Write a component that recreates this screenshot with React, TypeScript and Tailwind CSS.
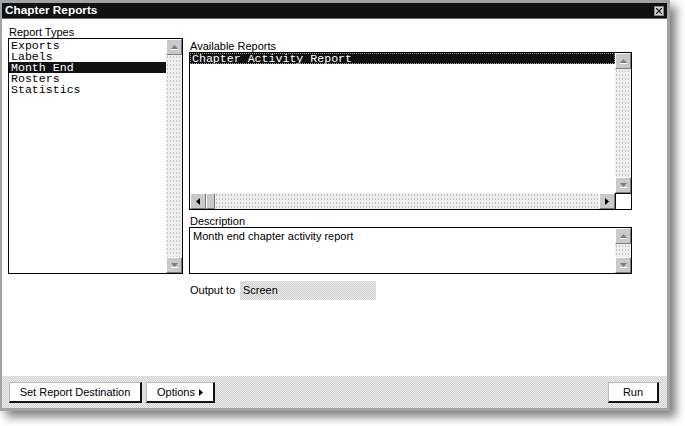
import React from "react";

const sans = { fontFamily: '"Liberation Sans", Arial, sans-serif' };
const mono = { fontFamily: '"Liberation Mono", "Courier New", monospace' };

type Dir = "up" | "down" | "left" | "right";

function Arrow({ dir, dark }: { dir: Dir; dark?: boolean }) {
  const fill = dark ? "#000" : "#7c7c7c";
  if (dir === "up")
    return (
      <svg width="7" height="5" viewBox="0 0 7 5">
        <path d="M3.5 0 L7 4 L0 4 Z" fill={fill} />
        {!dark && <rect x="0" y="4" width="7" height="1" fill="#fff" />}
      </svg>
    );
  if (dir === "down")
    return (
      <svg width="7" height="5" viewBox="0 0 7 5">
        <path d="M0 0 L7 0 L3.5 4 Z" fill={fill} />
        {!dark && <rect x="0" y="4" width="7" height="1" fill="#fff" />}
      </svg>
    );
  if (dir === "left")
    return (
      <svg width="4" height="7" viewBox="0 0 4 7">
        <path d="M4 0 L4 7 L0 3.5 Z" fill={fill} />
      </svg>
    );
  return (
    <svg width="4" height="7" viewBox="0 0 4 7">
      <path d="M0 0 L4 3.5 L0 7 Z" fill={fill} />
    </svg>
  );
}

function SBtn({ dir, dark }: { dir: Dir; dark?: boolean }) {
  return (
    <div className="w-4 h-4 shrink-0 bg-[#c9c9c9] border border-t-white border-l-white border-r-[#7a7a7a] border-b-[#7a7a7a] flex items-center justify-center">
      <Arrow dir={dir} dark={dark} />
    </div>
  );
}

const track =
  "bg-[#eeeeee] bg-[radial-gradient(#c4c4c4_0.5px,transparent_0.7px)] bg-[length:3px_4px]";

function VScroll() {
  return (
    <div className="w-4 flex flex-col shrink-0">
      <SBtn dir="up" />
      <div className={`flex-1 ${track}`} />
      <SBtn dir="down" />
    </div>
  );
}

function Btn({ children, w }: { children: React.ReactNode; w: string }) {
  return (
    <div
      className={`${w} h-[21px] bg-white border-t border-l border-t-[#bdbdbd] border-l-[#bdbdbd] border-r-2 border-b-2 border-r-[#111] border-b-[#111] flex items-center justify-center text-[11px] text-black`}
      style={sans}
    >
      {children}
    </div>
  );
}

export default function App() {
  const types = ["Exports", "Labels", "Month End", "Rosters", "Statistics"];
  return (
    <div className="w-[685px] h-[426px] bg-white overflow-hidden" style={sans}>
      <div className="w-[670px] h-[411px] flex flex-col border-t-[3px] border-b-[3px] border-l-2 border-r-[3px] border-[#a3a3a3] bg-white shadow-[6px_6px_9px_rgba(0,0,0,0.5)]">
        {/* Title bar */}
        <div className="h-[16px] bg-[#111] border-b border-[#6a6a6a] flex items-center justify-between pl-[3px] pr-[3px]">
          <span className="text-white font-bold text-[11.8px] leading-none">Chapter Reports</span>
          <div className="w-[10px] h-[10px] bg-[#d4d4d4] border border-[#888] flex items-center justify-center">
            <svg width="6" height="6" viewBox="0 0 6 6">
              <path d="M0 0 L6 6 M6 0 L0 6" stroke="#000" strokeWidth="1.1" />
            </svg>
          </div>
        </div>

        {/* Main */}
        <div className="flex-1 flex pl-[6px] pt-[7px]">
          {/* Left column */}
          <div className="w-[175px] flex flex-col">
            <div className="h-[12px] text-[11px] leading-[12px] text-black pl-[1px]">Report Types</div>
            <div className="h-[236px] border border-black flex">
              <div className="flex-1 pt-[1px]">
                {types.map((t) => (
                  <div
                    key={t}
                    className={`h-[11px] leading-[11px] text-[11.6px] pl-[2px] whitespace-pre overflow-hidden ${
                      t === "Month End" ? "bg-[#111] text-white" : "text-black"
                    }`}
                    style={mono}
                  >
                    {t}
                  </div>
                ))}
              </div>
              <VScroll />
            </div>
          </div>

          {/* Right column */}
          <div className="w-[443px] ml-[6px] pt-[14px] flex flex-col">
            <div className="h-[12px] text-[11px] leading-[12px] text-black pl-[1px]">Available Reports</div>
            <div className="h-[158px] border border-black flex flex-col">
              <div className="flex-1 flex">
                <div className="flex-1">
                  <div
                    className="h-[11px] leading-[11px] text-[11.6px] pl-[2px] bg-[#111] text-white outline-1 outline-dotted outline-[#9a9a9a] -outline-offset-1 whitespace-pre"
                    style={mono}
                  >
                    Chapter Activity Report
                  </div>
                </div>
                <VScroll />
              </div>
              <div className="h-4 flex">
                <SBtn dir="left" dark />
                <div className="w-[9px] h-4 bg-[#c9c9c9] border border-t-white border-l-white border-r-[#7a7a7a] border-b-[#7a7a7a]" />
                <div className={`flex-1 ${track}`} />
                <SBtn dir="right" dark />
                <div className="w-4 bg-white border-l border-t border-[#111]" />
              </div>
            </div>

            <div className="mt-[5px] h-[12px] text-[11px] leading-[12px] text-black pl-[1px]">Description</div>
            <div className="h-[47px] border border-black flex">
              <div className="flex-1 pl-[3px] pt-[2px] text-[11px] leading-[13px] text-black">
                Month end chapter activity report
              </div>
              <VScroll />
            </div>

            <div className="mt-[7px] h-[19px] flex items-center">
              <div className="w-[51px] text-[11px] text-black pl-[1px]">Output to</div>
              <div className="w-[136px] h-[19px] flex items-center pl-[3px] text-[11px] text-black bg-[repeating-conic-gradient(#cfcfcf_0%_25%,#ececec_0%_50%)] bg-[length:2px_2px]">
                Screen
              </div>
            </div>
          </div>
        </div>

        {/* Bottom bar */}
        <div className="h-[32px] pt-[6px] pl-[7px] pr-[8px] flex items-start bg-[repeating-conic-gradient(#cfcfcf_0%_25%,#efefef_0%_50%)] bg-[length:2px_2px]">
          <Btn w="w-[133px]">Set Report Destination</Btn>
          <div className="w-[4px]" />
          <Btn w="w-[69px]">
            <span>Options</span>
            <span className="ml-[4px] flex items-center">
              <Arrow dir="right" dark />
            </span>
          </Btn>
          <div className="flex-1" />
          <Btn w="w-[51px]">Run</Btn>
        </div>
      </div>
    </div>
  );
}
